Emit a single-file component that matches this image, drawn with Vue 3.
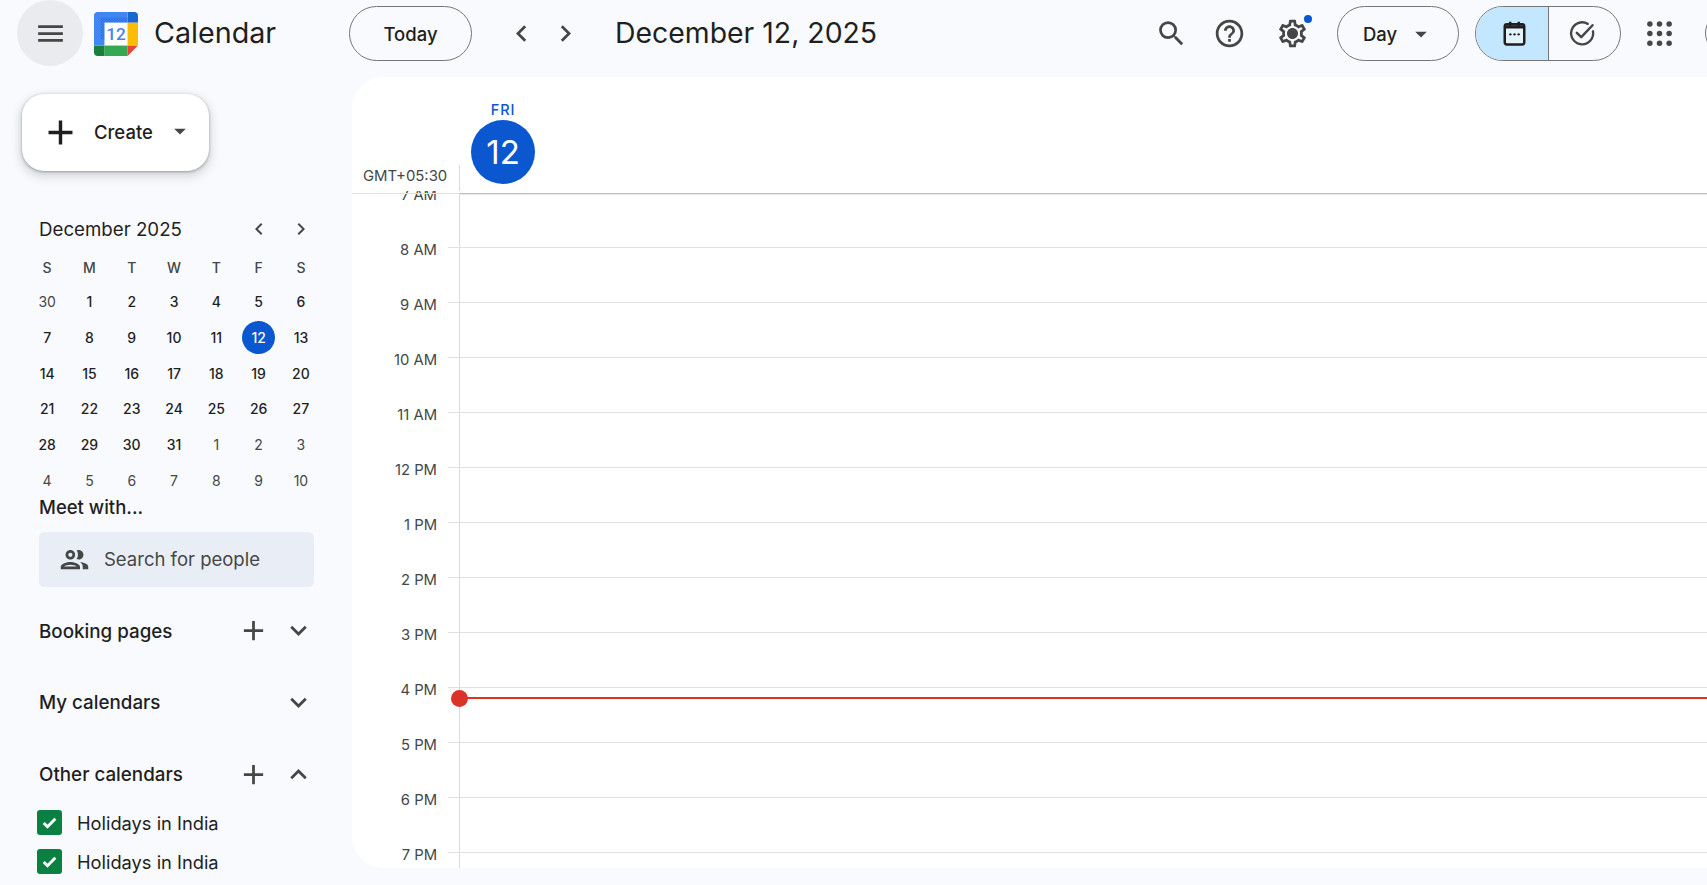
<script setup>
const weekdays = ['S', 'M', 'T', 'W', 'T', 'F', 'S']
const monthCells = [
  [30, 1, 2, 3, 4, 5, 6],
  [7, 8, 9, 10, 11, 12, 13],
  [14, 15, 16, 17, 18, 19, 20],
  [21, 22, 23, 24, 25, 26, 27],
  [28, 29, 30, 31, 1, 2, 3],
  [4, 5, 6, 7, 8, 9, 10]
]
function cellClass(r, d) {
  return {
    muted: (r === 0 && d > 20) || r === 5 || (r === 4 && d < 10),
    today: r === 1 && d === 12
  }
}
const hours = ['7 AM', '8 AM', '9 AM', '10 AM', '11 AM', '12 PM', '1 PM', '2 PM', '3 PM', '4 PM', '5 PM', '6 PM', '7 PM']
const icons = {
  menu: 'M3 18h18v-2H3v2zm0-5h18v-2H3v2zm0-7v2h18V6H3z',
  left: 'M15.41 16.59L10.83 12l4.58-4.59L14 6l-6 6 6 6z',
  right: 'M8.59 16.59L13.17 12 8.59 7.41 10 6l6 6-6 6z',
  search: 'M15.5 14h-.79l-.28-.27A6.471 6.471 0 0 0 16 9.5 6.5 6.5 0 1 0 9.5 16c1.61 0 3.09-.59 4.23-1.57l.27.28v.79l5 4.99L20.49 19l-4.99-5zm-6 0C7.01 14 5 11.99 5 9.5S7.01 5 9.5 5 14 7.01 14 9.5 11.99 14 9.5 14z',
  help: 'M11 18h2v-2h-2v2zm1-16C6.48 2 2 6.48 2 12s4.48 10 10 10 10-4.48 10-10S17.52 2 12 2zm0 18c-4.41 0-8-3.59-8-8s3.59-8 8-8 8 3.59 8 8-3.59 8-8 8zm0-14c-2.21 0-4 1.79-4 4h2c0-1.1.9-2 2-2s2 .9 2 2c0 2-3 1.75-3 5h2c0-2.25 3-2.5 3-5 0-2.21-1.79-4-4-4z',
  gear: 'M19.43 12.98c.04-.32.07-.64.07-.98 0-.34-.03-.66-.07-.98l2.11-1.65c.19-.15.24-.42.12-.64l-2-3.46c-.09-.16-.26-.25-.44-.25-.06 0-.12.01-.17.03l-2.49 1c-.52-.4-1.08-.73-1.69-.98l-.38-2.65C14.46 2.18 14.25 2 14 2h-4c-.25 0-.46.18-.49.42l-.38 2.65c-.61.25-1.17.59-1.69.98l-2.49-1c-.06-.02-.12-.03-.18-.03-.17 0-.34.09-.43.25l-2 3.46c-.13.22-.07.49.12.64l2.11 1.65c-.04.32-.07.65-.07.98 0 .33.03.66.07.98l-2.11 1.65c-.19.15-.24.42-.12.64l2 3.46c.09.16.26.25.44.25.06 0 .12-.01.17-.03l2.49-1c.52.4 1.08.73 1.69.98l.38 2.65c.03.24.24.42.49.42h4c.25 0 .46-.18.49-.42l.38-2.65c.61-.25 1.17-.59 1.69-.98l2.49 1c.06.02.12.03.18.03.17 0 .34-.09.43-.25l2-3.46c.12-.22.07-.49-.12-.64l-2.11-1.65zm-1.98-1.71c.04.31.05.52.05.73 0 .21-.02.43-.05.73l-.14 1.13.89.7 1.08.84-.7 1.21-1.27-.51-1.04-.42-.9.68c-.43.32-.84.56-1.25.73l-1.06.43-.16 1.13-.2 1.35h-1.4l-.19-1.35-.16-1.13-1.06-.43c-.43-.18-.83-.41-1.23-.71l-.91-.7-1.06.43-1.27.51-.7-1.21 1.08-.84.89-.7-.14-1.13c-.03-.31-.05-.54-.05-.74s.02-.43.05-.73l.14-1.13-.89-.7-1.08-.84.7-1.21 1.27.51 1.04.42.9-.68c.43-.32.84-.56 1.25-.73l1.06-.43.16-1.13.2-1.35h1.39l.19 1.35.16 1.13 1.06.43c.43.18.83.41 1.23.71l.91.7 1.06-.43 1.27-.51.7 1.21-1.07.85-.89.7.14 1.13zM12 8c-2.21 0-4 1.79-4 4s1.79 4 4 4 4-1.79 4-4-1.79-4-4-4z',
  plus: 'M19 13h-6v6h-2v-6H5v-2h6V5h2v6h6v2z',
  caret: 'M7 10l5 5 5-5z',
  more: 'M16.59 8.59L12 13.17 7.41 8.59 6 10l6 6 6-6z',
  less: 'M12 8l-6 6 1.41 1.41L12 10.83l4.59 4.58L18 14z',
  people: 'M9 13.75c-2.34 0-7 1.17-7 3.5V19h14v-1.75c0-2.33-4.66-3.5-7-3.5zM4.34 17c.84-.58 2.87-1.25 4.66-1.25s3.82.67 4.66 1.25H4.34zM9 12c1.93 0 3.5-1.57 3.5-3.5S10.93 5 9 5 5.5 6.57 5.5 8.5 7.07 12 9 12zm0-5c.83 0 1.5.67 1.5 1.5S9.83 10 9 10s-1.5-.67-1.5-1.5S8.17 7 9 7zm7.04 6.81c1.16.84 1.96 1.96 1.96 3.44V19h4v-1.75c0-2.02-3.5-3.17-5.96-3.44zM15 12c1.93 0 3.5-1.57 3.5-3.5S16.93 5 15 5c-.54 0-1.04.13-1.5.35.63.89 1 1.98 1 3.15s-.37 2.26-1 3.15c.46.22.96.35 1.5.35z'
}
const dots = [5, 12, 19]
</script>

<template>
  <div class="app">
    <header class="topbar">
      <button class="menu-btn"><svg class="i33" viewBox="0 0 24 24"><path :d="icons.menu" /></svg></button>
      <svg class="logo" viewBox="0 0 200 200">
        <defs>
          <pattern id="dither" width="12" height="12" patternUnits="userSpaceOnUse">
            <rect x="1" y="1" width="5" height="5" fill="#1967d2" />
            <rect x="7" y="7" width="5" height="5" fill="#1967d2" />
          </pattern>
        </defs>
        <polygon fill="#fff" points="152.6,47.4 47.4,47.4 47.4,152.6 152.6,152.6" />
        <polygon fill="#EA4335" points="152.6,200 200,152.6 152.6,152.6" />
        <polygon fill="#FBBC04" points="200,47.4 152.6,47.4 152.6,152.6 200,152.6" />
        <polygon fill="#34A853" points="152.6,152.6 47.4,152.6 47.4,200 152.6,200" />
        <path fill="#188038" d="M0 152.6v31.6C0 192.9 7.1 200 15.8 200h31.6v-47.4H0z" />
        <path fill="#1967D2" d="M200 47.4V15.8C200 7.1 192.9 0 184.2 0h-31.6v47.4H200z" />
        <path fill="#4285F4" d="M152.6 0H15.8C7.1 0 0 7.1 0 15.8v136.8h47.4V47.4h105.2V0z" />
        <path fill="url(#dither)" d="M30 25H152.6V47.4H47.4V125H30z" />
        <text x="100" y="125" text-anchor="middle" class="logo-num">12</text>
      </svg>
      <span class="brand">Calendar</span>
      <button class="pill today">Today</button>
      <button class="nav-btn first"><svg class="i33" viewBox="0 0 24 24"><path :d="icons.left" /></svg></button>
      <button class="nav-btn"><svg class="i33" viewBox="0 0 24 24"><path :d="icons.right" /></svg></button>
      <h1 class="date">December 12, 2025</h1>
      <div class="tools">
        <svg class="i33" viewBox="0 0 24 24"><path :d="icons.search" /></svg>
        <svg class="i33 help" viewBox="0 0 24 24"><path :d="icons.help" /></svg>
        <span class="gear"><svg class="i33" viewBox="0 0 24 24"><path :d="icons.gear" /></svg><i class="badge"></i></span>
      </div>
      <button class="pill day">Day<svg class="i28" viewBox="0 0 24 24"><path :d="icons.caret" /></svg></button>
      <div class="segment">
        <span class="seg on">
          <svg class="i33 dark" viewBox="0 0 24 24">
            <rect x="4.9" y="5.2" width="14.2" height="14.8" rx="1.6" fill="#e3f3fe" stroke="currentColor" stroke-width="1.8" />
            <path d="M5 6h14v2.4H5zM8 3.4h1.8V6H8zM14.2 3.4H16V6h-1.8z" />
            <circle cx="9" cy="12.6" r=".85" /><circle cx="12" cy="12.6" r=".85" /><circle cx="15" cy="12.6" r=".85" />
          </svg>
        </span>
        <span class="seg">
          <svg class="i33" viewBox="0 0 24 24">
            <path d="M19.6 10.4A8 8 0 1 1 15.8 5" fill="none" stroke="currentColor" stroke-width="1.7" stroke-linecap="round" />
            <path d="M7.9 11.5l3.2 3.2 8.2-8.7" fill="none" stroke="currentColor" stroke-width="1.8" stroke-linecap="round" stroke-linejoin="round" />
          </svg>
        </span>
      </div>
      <svg class="i33 apps" viewBox="0 0 24 24">
        <template v-for="y in dots" :key="y"><circle v-for="x in dots" :key="x" :cx="x" :cy="y" r="2" /></template>
      </svg>
      <span class="avatar"></span>
    </header>

    <div class="content">
      <aside class="sidebar">
        <button class="create">
          <svg class="i41" viewBox="0 0 24 24"><path :d="icons.plus" /></svg>
          <span>Create</span>
          <svg class="i28" viewBox="0 0 24 24"><path :d="icons.caret" /></svg>
        </button>

        <section class="mini">
          <div class="mini-head">
            <span class="mini-title">December 2025</span>
            <svg class="i24" viewBox="0 0 24 24"><path :d="icons.left" /></svg>
            <svg class="i24" viewBox="0 0 24 24"><path :d="icons.right" /></svg>
          </div>
          <div class="mini-row week"><span v-for="(w, i) in weekdays" :key="i">{{ w }}</span></div>
          <div v-for="(row, r) in monthCells" :key="r" class="mini-row">
            <span v-for="d in row" :key="d" :class="cellClass(r, d)"><b>{{ d }}</b></span>
          </div>
        </section>

        <h2 class="meet">Meet with...</h2>
        <div class="people">
          <svg class="i33" viewBox="0 0 24 24"><path :d="icons.people" /></svg>
          <span>Search for people</span>
        </div>

        <div class="group booking">
          <span class="group-title">Booking pages</span>
          <svg class="i33" viewBox="0 0 24 24"><path :d="icons.plus" /></svg>
          <svg class="i33 chev" viewBox="0 0 24 24"><path :d="icons.more" /></svg>
        </div>
        <div class="group">
          <span class="group-title">My calendars</span>
          <svg class="i33 chev" viewBox="0 0 24 24"><path :d="icons.more" /></svg>
        </div>
        <div class="group other">
          <span class="group-title">Other calendars</span>
          <svg class="i33" viewBox="0 0 24 24"><path :d="icons.plus" /></svg>
          <svg class="i33 chev" viewBox="0 0 24 24"><path :d="icons.less" /></svg>
        </div>
        <div class="cal-list">
          <label v-for="n in 2" :key="n" class="cal">
            <span class="box"><svg viewBox="0 0 24 24"><path d="M6 12.6l3.9 3.9 8.2-8.4" fill="none" stroke="#fff" stroke-width="3" /></svg></span>
            Holidays in India
          </label>
        </div>
      </aside>

      <main class="panel">
        <div class="day-head">
          <span class="gmt">GMT+05:30</span>
          <div class="day-col">
            <span class="dow">FRI</span>
            <span class="dom">12</span>
          </div>
        </div>
        <div class="grid">
          <div v-for="h in hours" :key="h" class="hour">
            <div class="hour-label"><span>{{ h }}</span></div>
            <div class="hour-cell"></div>
          </div>
          <div class="now"><i></i></div>
        </div>
      </main>
    </div>
  </div>
</template>

<style>
html, body { margin: 0; background: #f8fafd; }
</style>

<style scoped>
.app {
  width: 1707px;
  height: 885px;
  overflow: hidden;
  display: flex;
  flex-direction: column;
  background: #f8fafd;
  font-family: Inter, Roboto, "Noto Sans", sans-serif;
  color: #1f1f1f;
}
button { font: inherit; color: inherit; background: none; border: 0; padding: 0; }
svg { display: block; fill: currentColor; flex: none; }
.i24 { width: 24px; height: 24px; color: #444746; }
.i28 { width: 28px; height: 28px; color: #444746; }
.i33 { width: 33px; height: 33px; color: #444746; }
.i41 { width: 41px; height: 41px; color: #1f1f1f; }
.dark { color: #1f1f1f; }

.topbar { height: 77px; flex: none; display: flex; align-items: flex-start; padding-left: 17px; box-sizing: border-box; width: 1760px; }
.topbar > * { margin-top: 6px; }
.menu-btn { width: 66px; height: 66px; margin-top: 0; border-radius: 50%; background: #e9ebee; display: flex; align-items: center; justify-content: center; }
.logo { width: 44px; height: 44px; margin: 12px 0 0 11px; }
.logo-num { font-size: 78px; fill: #4285f4; font-family: Roboto, sans-serif; font-weight: 500; }
.brand { font-size: 28.7px; line-height: 53px; margin-left: 16px; width: 195px; color: #1f1f1f; }
.pill { height: 55px; box-sizing: border-box; border: 1px solid #747775; border-radius: 28px; font-size: 18.5px; font-weight: 500; }
.today { width: 123px; }
.nav-btn { width: 44px; height: 55px; display: flex; align-items: center; justify-content: center; }
.nav-btn.first { margin-left: 27px; }
.date { margin: 6px 0 0 28px; font-size: 28.4px; font-weight: 400; line-height: 53px; width: 261px; white-space: nowrap; }
.tools { display: flex; align-items: center; height: 55px; margin-left: 279px; }
.help { margin-left: 25px; }
.gear { position: relative; margin-left: 30px; }
.badge { position: absolute; right: -3px; top: -2px; width: 8px; height: 8px; border-radius: 50%; background: #0b57d0; }
.day { width: 122px; margin-left: 28px; display: flex; align-items: center; justify-content: flex-start; padding-left: 25px; }
.day svg { margin-left: 10px; }
.segment { display: flex; width: 146px; height: 55px; box-sizing: border-box; margin-left: 16px; border: 1px solid #747775; border-radius: 28px; overflow: hidden; }
.seg { flex: 1; display: flex; align-items: center; justify-content: center; }
.seg.on { background: #c2e7ff; flex: none; width: 73px; border-right: 1px solid #747775; padding-left: 4px; box-sizing: border-box; }
.seg:last-child { padding-right: 5px; }
.apps { margin-left: 22px; margin-top: 17px; }
.avatar { width: 44px; height: 44px; margin: 11px 0 0 29px; border-radius: 50%; border: 1px solid #747775; box-sizing: border-box; flex: none; }

.content { flex: 1; display: flex; min-height: 0; }
.sidebar { width: 352px; flex: none; box-sizing: border-box; padding-left: 39px; display: flex; flex-direction: column; }
.create {
  width: 187px; height: 77px; margin: 17px 0 0 -17px;
  background: #fff; border-radius: 22px;
  box-shadow: 0 1px 3px rgba(60,64,67,.45), 0 4px 8px 3px rgba(60,64,67,.15);
  display: flex; align-items: center; padding-left: 18px; box-sizing: border-box;
  font-size: 18.5px; font-weight: 500;
}
.create span { margin: -1px 0 0 13px; }
.create .i28 { margin-left: 13px; margin-top: -4px; }

.mini { margin: 40px 0 0 -13px; width: 296px; }
.mini-head { display: flex; align-items: center; height: 36px; padding-left: 13px; }
.mini-title { font-size: 18.7px; font-weight: 400; flex: 1; }
.mini-head svg + svg { margin-left: 18px; margin-right: 9px; }
.mini-row { display: grid; grid-template-columns: repeat(7, 42.3px); height: 35.7px; align-items: center; justify-items: center; font-size: 14px; }
.mini-row.week { height: 34px; margin-top: 3px; color: #444746; font-weight: 500; }
.mini-row span { display: flex; align-items: center; justify-content: center; width: 33px; height: 33px; border-radius: 50%; }
.mini-row b { font-weight: 500; }
.mini-row .muted { color: #444746; }
.mini-row .muted b { font-weight: 400; }
.mini-row .today { background: #0b57d0; color: #fff; }

.meet { margin: 0; font-size: 18.5px; font-weight: 500; line-height: 22px; margin-top: -2px; }
.people { display: flex; align-items: center; width: 275px; height: 55px; margin-top: 14px; background: #e9eef6; border-radius: 5.5px; box-sizing: border-box; padding-left: 19px; color: #444746; font-size: 18.5px; }
.people span { margin: -1px 0 0 13px; }
.group { display: flex; align-items: center; height: 33px; width: 276px; margin-top: 39px; }
.group.booking { margin-top: 27px; }
.group.other { margin-top: 39px; }
.group-title { flex: 1; font-size: 18.8px; font-weight: 500; }
.booking .group-title { margin-top: 2px; }
.chev { margin-left: 12px; }
.cal-list { margin-top: 12px; margin-left: -2px; }
.cal { display: flex; align-items: center; height: 39.2px; font-size: 18.3px; color: #1f1f1f; }
.box { width: 25px; height: 25px; background: #0b8043; border-radius: 3px; margin-right: 15px; display: flex; align-items: center; justify-content: center; }
.box svg { width: 23px; height: 23px; }

.panel { width: 1400px; flex: none; margin-bottom: 17px; background: #fff; border-radius: 32px; overflow: hidden; display: flex; flex-direction: column; }
.day-head { height: 114px; flex: none; display: flex; align-items: flex-end; position: relative; z-index: 1; background: #fff; }
.gmt { width: 107px; box-sizing: border-box; padding-left: 11px; font-size: 14.9px; line-height: 20px; margin-bottom: 5px; color: #444746; }
.day-col { height: 26px; border-left: 1px solid #dadce0; position: relative; flex: 1; }
.dow { position: absolute; left: -1px; top: -65px; width: 88px; text-align: center; font-size: 14.5px; color: #0b57d0; font-weight: 500; letter-spacing: .8px; line-height: 20px; }
.dom { position: absolute; left: 11px; top: -45px; width: 64px; height: 64px; border-radius: 50%; background: #0b57d0; color: #fff; font-size: 33px; line-height: 62px; display: flex; align-items: center; justify-content: center; padding-bottom: 1px; box-sizing: border-box; }
.grid { flex: 1; min-height: 0; position: relative; overflow: hidden; padding-top: 2px; }
.hour { display: flex; height: 55px; }
.hour:first-child { height: 54px; }
.hour-label { width: 107px; flex: none; position: relative; box-sizing: border-box; border-top: 1px solid transparent; font-size: 14.8px; color: #444746; }
.hour-label::after { content: ""; position: absolute; top: -1px; left: 96px; right: 0; border-top: 1px solid #dde1e8; }
.hour:first-child .hour-label::after { left: 0; }
.hour-label span { display: block; width: 85px; text-align: right; line-height: 20px; margin-top: -8px; }
.hour:first-child .hour-label span { margin-top: -9px; }
.hour-cell { flex: 1; border-left: 1px solid #dadce0; border-top: 1px solid #dde1e8; }
.hour:first-child .hour-cell { border-top-color: #bcbcbc; box-shadow: inset 0 1px 1px rgba(60,64,67,.12); }
.now { position: absolute; left: 107px; right: 0; top: 506px; height: 2px; background: #dc3328; }
.now i { position: absolute; left: -8px; top: -7.5px; width: 17px; height: 17px; border-radius: 50%; background: #dc3328; }
</style>
